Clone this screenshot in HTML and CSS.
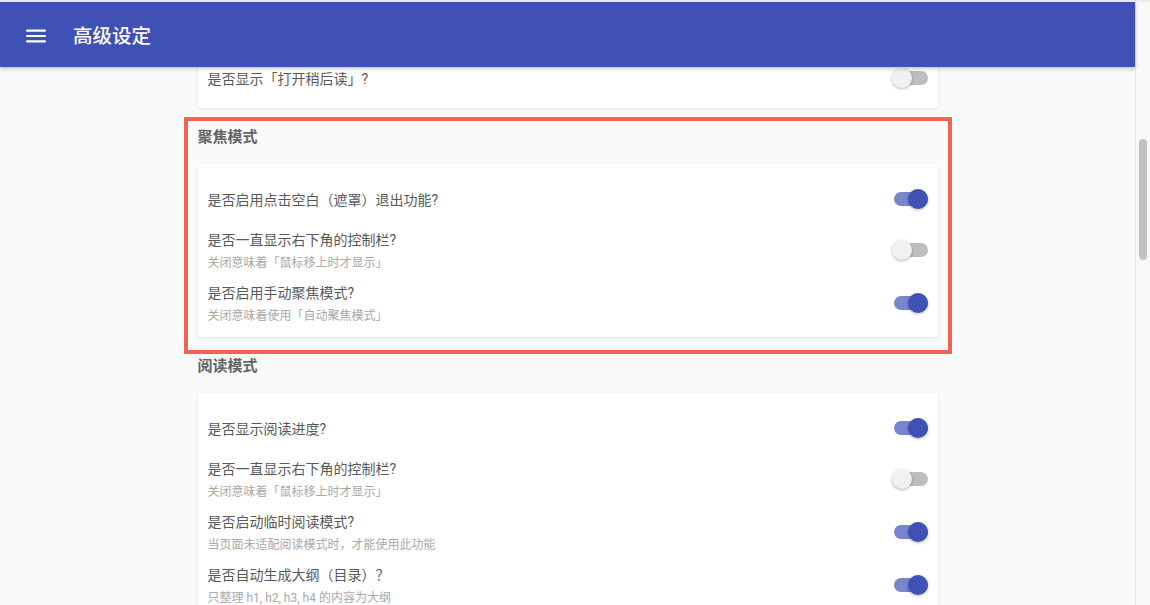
FILE: index.html
```html
<!DOCTYPE html>
<html lang="zh-CN">
<head>
    <meta charset="UTF-8">
    <title>高级设定</title>
    <link rel="stylesheet" href="styles.css">
</head>
<body>
    <div class="window">
        <div class="app">
            <header class="toolbar">
                <svg class="menu-icon" viewBox="0 0 24 24" width="26" height="26">
                    <path fill="#fff" d="M3 18h18v-2H3v2zm0-5h18v-2H3v2zm0-7v2h18V6H3z"/>
                </svg>
                <span class="toolbar-title">高级设定</span>
            </header>

            <main class="content">
                <div class="column">
                    <section class="section">
                        <div class="card card-first">
                            <div class="row">
                                <div class="label"><div class="title">是否显示「打开稍后读」?</div></div>
                                <span class="toggle"><span class="track"></span><span class="thumb"></span></span>
                            </div>
                        </div>
                    </section>

                    <section class="section highlight">
                        <h2 class="section-title">聚焦模式</h2>
                        <div class="card">
                            <div class="row">
                                <div class="label"><div class="title">是否启用点击空白（遮罩）退出功能?</div></div>
                                <span class="toggle on"><span class="track"></span><span class="thumb"></span></span>
                            </div>
                            <div class="row">
                                <div class="label">
                                    <div class="title">是否一直显示右下角的控制栏?</div>
                                    <div class="desc">关闭意味着「鼠标移上时才显示」</div>
                                </div>
                                <span class="toggle"><span class="track"></span><span class="thumb"></span></span>
                            </div>
                            <div class="row">
                                <div class="label">
                                    <div class="title">是否启用手动聚焦模式?</div>
                                    <div class="desc">关闭意味着使用「自动聚焦模式」</div>
                                </div>
                                <span class="toggle on"><span class="track"></span><span class="thumb"></span></span>
                            </div>
                        </div>
                    </section>

                    <section class="section">
                        <h2 class="section-title">阅读模式</h2>
                        <div class="card">
                            <div class="row">
                                <div class="label"><div class="title">是否显示阅读进度?</div></div>
                                <span class="toggle on"><span class="track"></span><span class="thumb"></span></span>
                            </div>
                            <div class="row">
                                <div class="label">
                                    <div class="title">是否一直显示右下角的控制栏?</div>
                                    <div class="desc">关闭意味着「鼠标移上时才显示」</div>
                                </div>
                                <span class="toggle"><span class="track"></span><span class="thumb"></span></span>
                            </div>
                            <div class="row">
                                <div class="label">
                                    <div class="title">是否启动临时阅读模式?</div>
                                    <div class="desc">当页面未适配阅读模式时，才能使用此功能</div>
                                </div>
                                <span class="toggle on"><span class="track"></span><span class="thumb"></span></span>
                            </div>
                            <div class="row">
                                <div class="label">
                                    <div class="title">是否自动生成大纲（目录）？</div>
                                    <div class="desc">只整理 h1, h2, h3, h4 的内容为大纲</div>
                                </div>
                                <span class="toggle on"><span class="track"></span><span class="thumb"></span></span>
                            </div>
                        </div>
                    </section>
                </div>
            </main>
        </div>

        <div class="scrollbar"><div class="scroll-thumb"></div></div>
    </div>
</body>
</html>
```

FILE: styles.css
```css
* {
    box-sizing: border-box;
}

html, body {
    margin: 0;
    height: 100%;
    overflow: hidden;
}

body {
    font-family: Roboto, "Noto Sans CJK SC", sans-serif;
    background-color: #fafafa;
    border-top: 2px solid #ececec;
}

.window {
    display: flex;
    height: 603px;
}

.app {
    flex: 1;
    display: flex;
    flex-direction: column;
    min-width: 0;
}

/* top bar */
.toolbar {
    position: relative;
    z-index: 2;
    height: 65px;
    flex-shrink: 0;
    display: flex;
    align-items: center;
    padding-left: 23px;
    background-color: #3f51b5;
    box-shadow: 0 2px 4px rgba(0, 0, 0, 0.22);
}

.menu-icon {
    display: block;
    margin-top: 2px;
}

.toolbar-title {
    margin-left: 24px;
    color: #fff;
    font-size: 19.5px;
    font-weight: 500;
}

/* content */
.content {
    flex: 1;
    overflow: hidden;
}

.column {
    width: 740px;
    margin: -24px auto 0;
}

.section {
    padding-bottom: 3px;
}

.section + .section {
    margin-top: 20px;
}

.highlight {
    outline: 4px solid #f26355;
    outline-offset: 10px;
}

.section-title {
    margin: 0 0 21px;
    font-size: 15px;
    line-height: 12px;
    font-weight: bold;
    color: #636363;
}

.card {
    background: #fff;
    border-radius: 2px;
    padding: 12px 10px 7px;
    box-shadow: 0 1px 3px rgba(0, 0, 0, 0.1);
}

.card-first {
    padding-bottom: 5px;
}

.row {
    display: flex;
    align-items: center;
    justify-content: space-between;
    min-height: 48px;
    padding: 6px 0;
}

.title {
    font-size: 14px;
    line-height: 20px;
    color: #595959;
}

.desc {
    margin-top: 5px;
    font-size: 12px;
    line-height: 16px;
    color: #a8a8a8;
}

/* switches */
.toggle {
    position: relative;
    width: 36px;
    height: 20px;
    flex-shrink: 0;
    margin-top: -2px;
}

.toggle .track {
    position: absolute;
    left: 2px;
    top: 3px;
    width: 34px;
    height: 14px;
    border-radius: 7px;
    background-color: #bdbdbd;
}

.toggle .thumb {
    position: absolute;
    left: 0;
    top: 0;
    width: 20px;
    height: 20px;
    border-radius: 50%;
    background-color: #f1f1f1;
    box-shadow: 0 1px 3px rgba(0, 0, 0, 0.3);
}

.toggle.on .track {
    background-color: #7986cb;
}

.toggle.on .thumb {
    left: 16px;
    background-color: #3f51b5;
}

/* fake scrollbar */
.scrollbar {
    width: 15px;
    flex-shrink: 0;
    border-left: 1px solid #e6e6e6;
    background-color: #f8f8f8;
    padding: 137px 0 0 3px;
}

.scroll-thumb {
    width: 8px;
    height: 121px;
    border-radius: 4px;
    background-color: #c2c2c2;
}
```
